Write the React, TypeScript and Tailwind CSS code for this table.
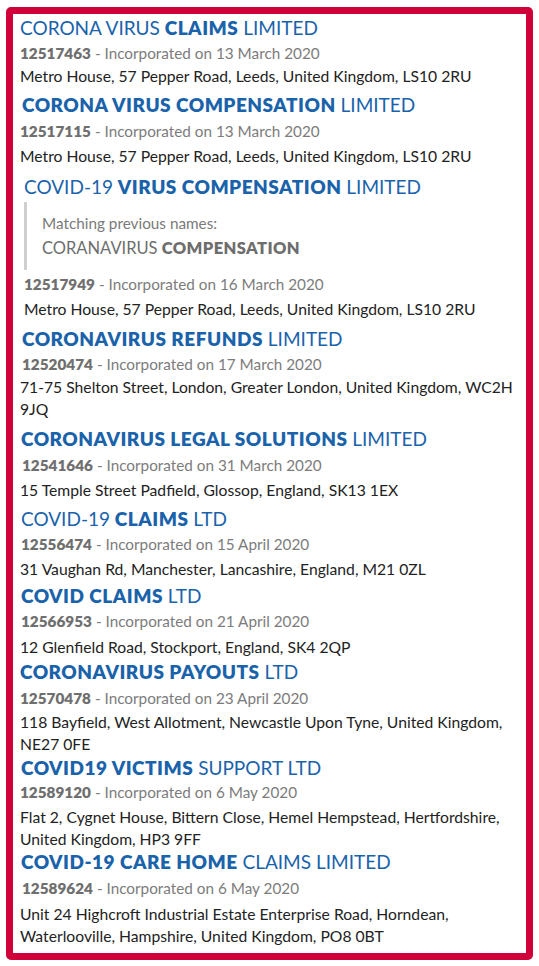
const companies = [
  {
    pre: "CORONA VIRUS ",
    bold: "CLAIMS",
    post: " LIMITED",
    number: "12517463",
    date: "13 March 2020",
    address: ["Metro House, 57 Pepper Road, Leeds, United Kingdom, LS10 2RU"],
    t: "mt-[2px] pl-0",
    m: "mt-[2px] pl-0",
    a: "mt-[1px] pl-0",
  },
  {
    pre: "",
    bold: "CORONA VIRUS COMPENSATION",
    post: " LIMITED",
    number: "12517115",
    date: "13 March 2020",
    address: ["Metro House, 57 Pepper Road, Leeds, United Kingdom, LS10 2RU"],
    t: "mt-[6px] pl-[2px]",
    m: "mt-[3px] pl-0",
    a: "mt-[3px] pl-0",
  },
  {
    pre: "COVID-19 ",
    bold: "VIRUS COMPENSATION",
    post: " LIMITED",
    number: "12517949",
    date: "16 March 2020",
    address: ["Metro House, 57 Pepper Road, Leeds, United Kingdom, LS10 2RU"],
    previous: true,
    t: "mt-[8px] pl-[4px]",
    m: "mt-[3px] pl-[4px]",
    a: "mt-[3px] pl-[4px]",
  },
  {
    pre: "",
    bold: "CORONAVIRUS REFUNDS",
    post: " LIMITED",
    number: "12520474",
    date: "17 March 2020",
    address: ["71-75 Shelton Street, London, Greater London, United Kingdom, WC2H", "9JQ"],
    t: "mt-[7px] pl-[2px]",
    m: "mt-[2px] pl-[2px]",
    a: "mt-[1px] pl-0",
  },
  {
    pre: "",
    bold: "CORONAVIRUS LEGAL SOLUTIONS",
    post: " LIMITED",
    number: "12541646",
    date: "31 March 2020",
    address: ["15 Temple Street Padfield, Glossop, England, SK13 1EX"],
    t: "mt-[7px] pl-[1px]",
    m: "mt-[3px] pl-[2px]",
    a: "mt-[3px] pl-0",
  },
  {
    pre: "COVID-19 ",
    bold: "CLAIMS",
    post: " LTD",
    number: "12556474",
    date: "15 April 2020",
    address: ["31 Vaughan Rd, Manchester, Lancashire, England, M21 0ZL"],
    t: "mt-[6px] pl-[1px]",
    m: "mt-[2px] pl-[1px]",
    a: "mt-[3px] pl-0",
  },
  {
    pre: "",
    bold: "COVID CLAIMS",
    post: " LTD",
    number: "12566953",
    date: "21 April 2020",
    address: ["12 Glenfield Road, Stockport, England, SK4 2QP"],
    t: "mt-[4px] pl-[1px]",
    m: "mt-[2px] pl-[1px]",
    a: "mt-[4px] pl-0",
  },
  {
    pre: "",
    bold: "CORONAVIRUS PAYOUTS",
    post: " LTD",
    number: "12570478",
    date: "23 April 2020",
    address: ["118 Bayfield, West Allotment, Newcastle Upon Tyne, United Kingdom,", "NE27 0FE"],
    t: "mt-[2px] pl-0",
    m: "mt-[3px] pl-0",
    a: "mt-[2px] pl-0",
  },
  {
    pre: "",
    bold: "COVID19 VICTIMS",
    post: " SUPPORT LTD",
    number: "12589120",
    date: "6 May 2020",
    address: ["Flat 2, Cygnet House, Bittern Close, Hemel Hempstead, Hertfordshire,", "United Kingdom, HP3 9FF"],
    t: "mt-[1px] pl-[1px]",
    m: "mt-[1px] pl-0",
    a: "mt-[3px] pl-0",
  },
  {
    pre: "",
    bold: "COVID-19 CARE HOME",
    post: " CLAIMS LIMITED",
    number: "12589624",
    date: "6 May 2020",
    address: ["Unit 24 Highcroft Industrial Estate Enterprise Road, Horndean,", "Waterlooville, Hampshire, United Kingdom, PO8 0BT"],
    t: "mt-0 pl-[1px]",
    m: "mt-[3px] pl-[2px]",
    a: "mt-[4px] pl-0",
  },
];

const font = { fontFamily: "Lato, 'Open Sans', sans-serif" };

export default function App() {
  return (
    <div className="w-[539px] h-[966px] bg-white pt-[7px] pl-[6px]" style={font}>
      <div className="w-[527px] h-[953px] border-[7px] border-[#d0003a] rounded-[5px] pl-[7px] overflow-hidden">
        {companies.map((c) => (
          <div key={c.number}>
            <div className={`${c.t} h-[24px] leading-[24px] text-[19px] text-[#1a63ab] whitespace-nowrap`}>
              {c.pre}
              <span className="font-extrabold tracking-[0.5px]">{c.bold}</span>
              {c.post}
            </div>
            {c.previous && (
              <div className="mt-[3px] ml-[4px] h-[68px] border-l-[3px] border-[#cfcfcf] pl-[15px] pt-[9px]">
                <div className="h-[24px] leading-[24px] text-[15.3px] text-[#7a7a7a]">Matching previous names:</div>
                <div className="h-[26px] leading-[26px] text-[16.5px] text-[#6e6e6e]">
                  CORANAVIRUS <span className="font-extrabold tracking-[0.4px]">COMPENSATION</span>
                </div>
              </div>
            )}
            <div className={`${c.m} h-[22px] leading-[22px] text-[15.3px] text-[#7c7c7c] whitespace-nowrap`}>
              <span className="font-extrabold text-[#6f6f6f]">{c.number}</span> - Incorporated on {c.date}
            </div>
            <div className={`${c.a} text-[15.7px] leading-[22px] text-[#222]`}>
              {c.address.map((line) => (
                <div key={line} className="h-[22px] whitespace-nowrap">
                  {line}
                </div>
              ))}
            </div>
          </div>
        ))}
      </div>
    </div>
  );
}
